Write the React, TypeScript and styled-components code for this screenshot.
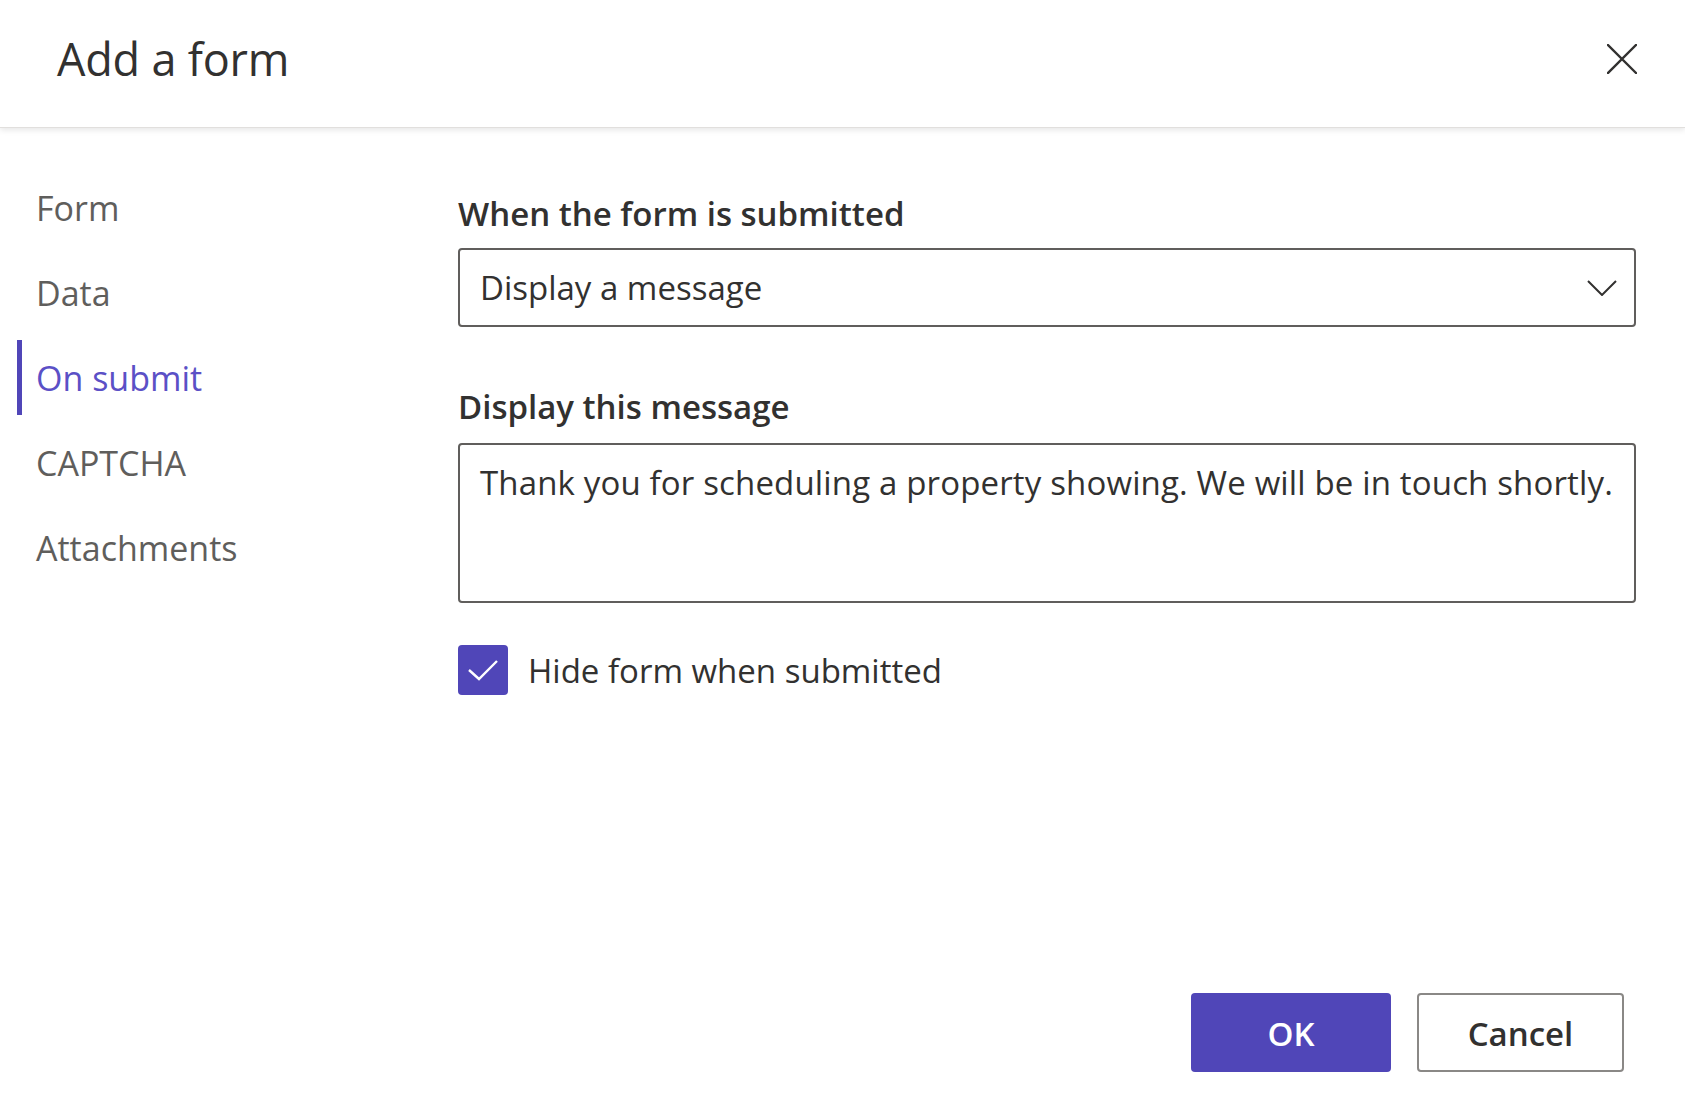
import React, { useState } from 'react';
import styled, { createGlobalStyle } from 'styled-components';

const navItems = ['Form', 'Data', 'On submit', 'CAPTCHA', 'Attachments'];

const GlobalStyle = createGlobalStyle`
  html, body {
    margin: 0;
    padding: 0;
    background: #fff;
  }

  body {
    font-family: 'Segoe UI', 'Open Sans', 'Noto Sans', sans-serif;
    color: #323130;
  }

  * {
    box-sizing: border-box;
  }
`;

const CloseIcon = () => (
  <svg width="30" height="30" viewBox="0 0 30 30" fill="none">
    <path d="M1 1L29 29M29 1L1 29" stroke="#323130" strokeWidth="2.4" strokeLinecap="square" />
  </svg>
);

const ChevronIcon = () => (
  <svg width="30" height="16" viewBox="0 0 30 16" fill="none">
    <path d="M1 1L15 15L29 1" stroke="#323130" strokeWidth="2" />
  </svg>
);

const CheckIcon = () => (
  <svg width="50" height="50" viewBox="0 0 50 50" fill="none">
    <path d="M11 25L21 34L39 16" stroke="#fff" strokeWidth="2.4" />
  </svg>
);

const App = () => {
  const [active, setActive] = useState('On submit');
  const [hideForm, setHideForm] = useState(true);

  return (
    <Dialog>
      <GlobalStyle />
      <Header>
        <Title>Add a form</Title>
        <IconButton aria-label="Close">
          <CloseIcon />
        </IconButton>
      </Header>

      <Body>
        <Nav>
          {navItems.map(item => (
            <NavItem key={item} $active={item === active} onClick={() => setActive(item)}>
              {item}
            </NavItem>
          ))}
        </Nav>

        <Content>
          <Label>When the form is submitted</Label>
          <Dropdown>
            <span>Display a message</span>
            <ChevronIcon />
          </Dropdown>

          <Label $spaced>Display this message</Label>
          <MessageBox
            defaultValue="Thank you for scheduling a property showing. We will be in touch shortly."
            spellCheck={false}
          />

          <CheckRow onClick={() => setHideForm(v => !v)}>
            <CheckBox $checked={hideForm}>{hideForm && <CheckIcon />}</CheckBox>
            <span>Hide form when submitted</span>
          </CheckRow>
        </Content>
      </Body>

      <Footer>
        <PrimaryButton>OK</PrimaryButton>
        <SecondaryButton>Cancel</SecondaryButton>
      </Footer>
    </Dialog>
  );
};

export default App;

const Dialog = styled.div`
  height: 100vh;
  display: flex;
  flex-direction: column;
  background: #fff;
`;

const Header = styled.header`
  height: 128px;
  flex-shrink: 0;
  display: flex;
  align-items: center;
  justify-content: space-between;
  padding: 0 48px 10px 57px;
  border-bottom: 1px solid #e1dfdd;
  box-shadow: 0 2px 6px rgba(0, 0, 0, 0.1);
  position: relative;
  z-index: 1;
`;

const Title = styled.h1`
  margin: 0;
  font-size: 45px;
  font-weight: 400;
  color: #323130;
  letter-spacing: -0.2px;
`;

const IconButton = styled.button`
  border: 0;
  background: none;
  padding: 0;
  width: 30px;
  height: 30px;
  display: flex;
  cursor: pointer;
`;

const Body = styled.div`
  flex: 1;
  display: flex;
  min-height: 0;
`;

const Nav = styled.nav`
  width: 458px;
  flex-shrink: 0;
  display: flex;
  flex-direction: column;
  gap: 10px;
  padding: 42px 0 0 17px;
`;

const NavItem = styled.div<{ $active?: boolean }>`
  height: 75px;
  display: flex;
  align-items: center;
  padding-left: 14px;
  border-left: 5px solid ${p => (p.$active ? '#5046b8' : 'transparent')};
  font-size: 34px;
  color: ${p => (p.$active ? '#5b50c6' : '#5f5e5c')};
  cursor: pointer;
`;

const Content = styled.div`
  flex: 1;
  display: flex;
  flex-direction: column;
  padding: 66px 49px 0 0;
`;

const Label = styled.div<{ $spaced?: boolean }>`
  font-size: 33px;
  font-weight: 600;
  line-height: 40px;
  color: #323130;
  margin-top: ${p => (p.$spaced ? '60px' : '0')};
  margin-bottom: ${p => (p.$spaced ? '16px' : '14px')};
`;

const Dropdown = styled.div`
  height: 79px;
  display: flex;
  align-items: center;
  justify-content: space-between;
  padding: 0 17px 0 20px;
  border: 2px solid #605e5c;
  border-radius: 4px;
  font-size: 33px;
  color: #323130;
  cursor: pointer;
`;

const MessageBox = styled.textarea`
  height: 160px;
  resize: none;
  padding: 15px 20px 13px;
  border: 2px solid #605e5c;
  border-radius: 4px;
  font-family: inherit;
  font-size: 33px;
  line-height: 45px;
  letter-spacing: 0.15px;
  color: #323130;
  outline: none;
`;

const CheckRow = styled.label`
  margin-top: 42px;
  display: flex;
  align-items: center;
  gap: 20px;
  font-size: 33px;
  color: #323130;
  cursor: pointer;
`;

const CheckBox = styled.span<{ $checked?: boolean }>`
  width: 50px;
  height: 50px;
  border-radius: 4px;
  display: flex;
  background: ${p => (p.$checked ? '#5046b8' : '#fff')};
  border: ${p => (p.$checked ? 'none' : '2px solid #605e5c')};
`;

const Footer = styled.footer`
  display: flex;
  justify-content: flex-end;
  gap: 26px;
  padding: 0 61px 36px 0;
`;

const BaseButton = styled.button`
  height: 79px;
  padding-top: 3px;
  border-radius: 4px;
  font-family: inherit;
  font-size: 33px;
  font-weight: 600;
  cursor: pointer;
`;

const PrimaryButton = styled(BaseButton)`
  width: 200px;
  border: 0;
  background: #5046b8;
  color: #fff;
`;

const SecondaryButton = styled(BaseButton)`
  width: 207px;
  border: 2px solid #8a8886;
  background: #fff;
  color: #323130;
`;
